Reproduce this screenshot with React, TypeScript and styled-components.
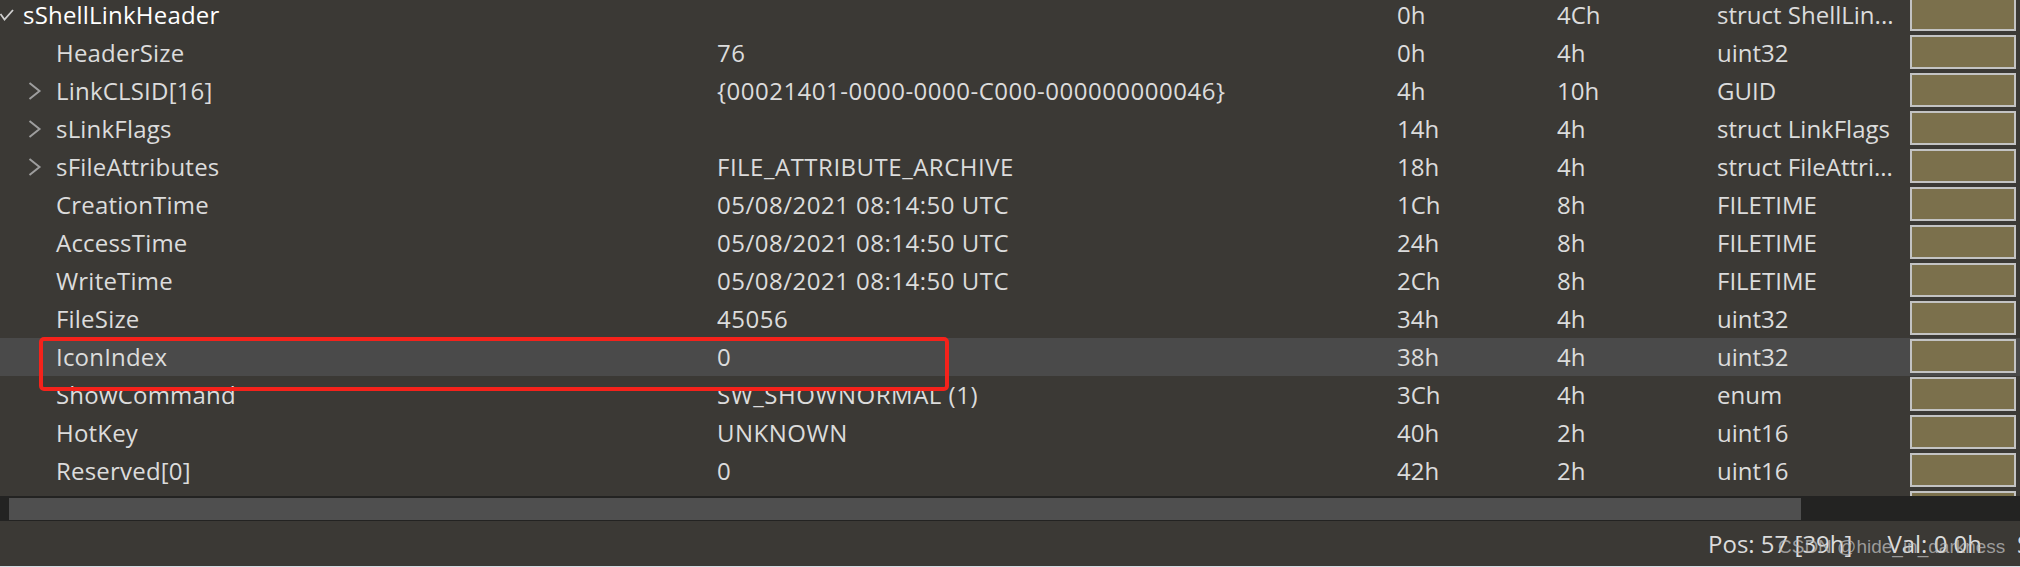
import styled, { createGlobalStyle } from 'styled-components';

interface Field {
	name: string;
	value: string;
	start: string;
	size: string;
	type: string;
	depth: number;
	icon: 'check' | 'chevron' | 'none';
}

const fields: Field[] = [
	{ name: 'sShellLinkHeader', value: '', start: '0h', size: '4Ch', type: 'struct ShellLin...', depth: 0, icon: 'check' },
	{ name: 'HeaderSize', value: '76', start: '0h', size: '4h', type: 'uint32', depth: 1, icon: 'none' },
	{ name: 'LinkCLSID[16]', value: '{00021401-0000-0000-C000-000000000046}', start: '4h', size: '10h', type: 'GUID', depth: 1, icon: 'chevron' },
	{ name: 'sLinkFlags', value: '', start: '14h', size: '4h', type: 'struct LinkFlags', depth: 1, icon: 'chevron' },
	{ name: 'sFileAttributes', value: 'FILE_ATTRIBUTE_ARCHIVE', start: '18h', size: '4h', type: 'struct FileAttri...', depth: 1, icon: 'chevron' },
	{ name: 'CreationTime', value: '05/08/2021 08:14:50 UTC', start: '1Ch', size: '8h', type: 'FILETIME', depth: 1, icon: 'none' },
	{ name: 'AccessTime', value: '05/08/2021 08:14:50 UTC', start: '24h', size: '8h', type: 'FILETIME', depth: 1, icon: 'none' },
	{ name: 'WriteTime', value: '05/08/2021 08:14:50 UTC', start: '2Ch', size: '8h', type: 'FILETIME', depth: 1, icon: 'none' },
	{ name: 'FileSize', value: '45056', start: '34h', size: '4h', type: 'uint32', depth: 1, icon: 'none' },
	{ name: 'IconIndex', value: '0', start: '38h', size: '4h', type: 'uint32', depth: 1, icon: 'none' },
	{ name: 'ShowCommand', value: 'SW_SHOWNORMAL (1)', start: '3Ch', size: '4h', type: 'enum', depth: 1, icon: 'none' },
	{ name: 'HotKey', value: 'UNKNOWN', start: '40h', size: '2h', type: 'uint16', depth: 1, icon: 'none' },
	{ name: 'Reserved[0]', value: '0', start: '42h', size: '2h', type: 'uint16', depth: 1, icon: 'none' },
	{ name: 'Reserved[1]', value: '0', start: '44h', size: '4h', type: 'uint32', depth: 1, icon: 'none' },
];

const SELECTED = 9;

const GlobalStyle = createGlobalStyle`
	html, body {
		margin: 0;
		padding: 0;
		background: #3b3935;
		overflow: hidden;
	}
	* {
		box-sizing: border-box;
	}
`;

const Window = styled.div`
	width: 2020px;
	height: 567px;
	display: flex;
	flex-direction: column;
	background: #3b3935;
	font-family: 'Open Sans', 'Noto Sans', sans-serif;
	font-size: 24px;
	color: #dcdcdc;
	border-bottom: 1px solid #d4dbe2;
`;

const Viewport = styled.div`
	position: relative;
	height: 496px;
	overflow: hidden;
	flex: none;
`;

const List = styled.div`
	margin-top: -4px;
`;

const Row = styled.div<{ $selected: boolean }>`
	display: grid;
	grid-template-columns: 717px 680px 160px 160px 193px 1fr;
	height: 38px;
	line-height: 38px;
	background: ${(p) => (p.$selected ? '#4a4a4a' : 'transparent')};
	white-space: nowrap;
`;

const NameCell = styled.div<{ $depth: number; $root: boolean }>`
	display: flex;
	align-items: center;
	padding-left: ${(p) => p.$depth * 28}px;
	color: ${(p) => (p.$root ? '#ffffff' : '#dcdcdc')};
	letter-spacing: 0.2px;
	overflow: hidden;
`;

const Expander = styled.span<{ $width: number }>`
	display: flex;
	align-items: center;
	width: ${(p) => p.$width}px;
	height: 38px;
	flex: none;
`;

const Cell = styled.div<{ $spacing?: number }>`
	overflow: hidden;
	text-overflow: ellipsis;
	letter-spacing: ${(p) => p.$spacing ?? 0}px;
`;

const ColorSwatch = styled.div`
	align-self: start;
	margin-top: 1px;
	width: 106px;
	height: 34px;
	border: 2px solid #c3c3c3;
	background: #7b704c;
`;

const Annotation = styled.div`
	position: absolute;
	left: 39px;
	top: 337px;
	width: 910px;
	height: 54px;
	border: 4px solid #f5221b;
	border-radius: 5px;
	pointer-events: none;
`;

const HScroll = styled.div`
	height: 25px;
	flex: none;
	background: #232322;
	padding: 2px 0 1px 9px;
`;

const Thumb = styled.div`
	width: 1792px;
	height: 22px;
	background: #4f4f4f;
`;

const StatusBar = styled.div`
	position: relative;
	height: 45px;
	line-height: 45px;
	flex: none;
	display: flex;
	gap: 35px;
	padding-left: 1708px;
	white-space: nowrap;
	overflow: hidden;
	color: #dcdcdc;
`;

const Watermark = styled.span`
	position: absolute;
	left: 1778px;
	top: 16px;
	font-family: 'Liberation Sans', Arial, sans-serif;
	font-size: 19px;
	line-height: 19px;
	color: rgba(190, 190, 190, 0.75);
`;

const Check = () => (
	<svg width="14" height="12" viewBox="0 0 14 12">
		<polyline points="0.5,5 4.5,10.5 13,1" fill="none" stroke="#cfcfcf" strokeWidth="1.8" />
	</svg>
);

const Chevron = () => (
	<svg width="14" height="18" viewBox="0 0 14 18">
		<polyline points="1.5,1 11.5,9 1.5,17" fill="none" stroke="#9e9e9e" strokeWidth="2" />
	</svg>
);

const App = () => {
	return (
		<>
			<GlobalStyle />
			<Window>
				<Viewport>
					<List>
						{fields.map((f, i) => (
							<Row key={f.name} $selected={i === SELECTED}>
								<NameCell $depth={f.depth} $root={f.depth === 0}>
									<Expander $width={f.depth === 0 ? 23 : 28}>
										{f.icon === 'check' && <Check />}
										{f.icon === 'chevron' && <Chevron />}
									</Expander>
									{f.name}
								</NameCell>
								<Cell $spacing={0.5}>{f.value}</Cell>
								<Cell>{f.start}</Cell>
								<Cell>{f.size}</Cell>
								<Cell>{f.type}</Cell>
								<ColorSwatch />
							</Row>
						))}
					</List>
					<Annotation />
				</Viewport>
				<HScroll>
					<Thumb />
				</HScroll>
				<StatusBar>
					<span>Pos: 57 [39h]</span>
					<span>Val: 0 0h</span>
					<span>Size: 0</span>
					<Watermark>CSDN @hide_in_darkness</Watermark>
				</StatusBar>
			</Window>
		</>
	);
};

export default App;
